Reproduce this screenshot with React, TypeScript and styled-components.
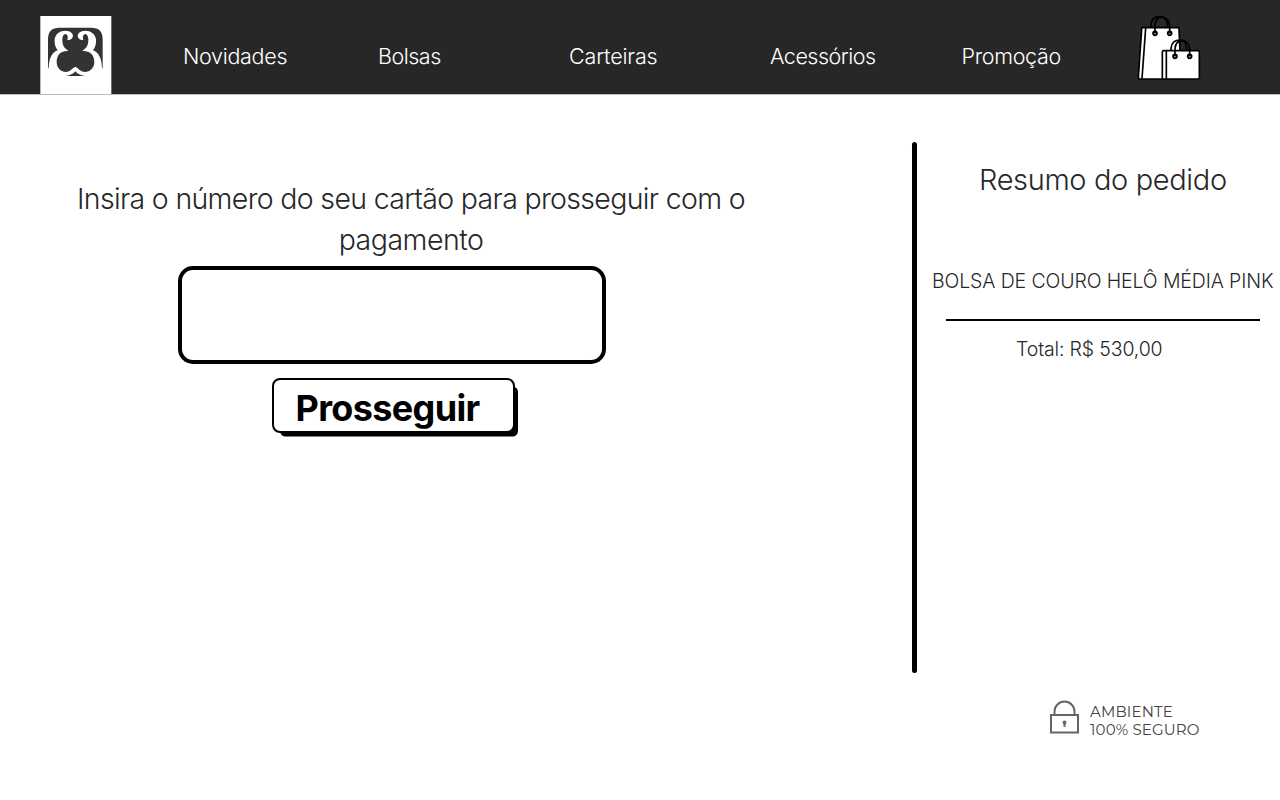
import React from "react";
import styled, { createGlobalStyle } from "styled-components";

const GlobalStyle = createGlobalStyle`
  * { box-sizing: border-box; }
  body {
    margin: 0;
    background: #fff;
    color: #272727;
    font-family: Inter, "Liberation Sans", sans-serif;
    font-weight: 300;
    overflow: hidden;
  }
  h1, h2, p { margin: 0; font-weight: 300; }
`;

const Page = styled.div`
  width: 1280px;
  height: 800px;
`;

const Header = styled.header`
  display: flex;
  height: 95px;
  padding: 16px 60px 0 40px;
  background: #272727;
  border-bottom: 1px solid #bdbdbd;
`;

const Logo = styled.svg`
  flex: none;
  width: 72px;
  height: 78px;
`;

const Nav = styled.nav`
  flex: none;
  display: grid;
  grid-template-columns: 195px 191px 201px 191.5px 150px;
  margin: 26px 0 0 71px;
  width: 954px;
`;

const NavLink = styled.a<{ $spacing: number }>`
  color: #fff;
  font-size: 21.5px;
  line-height: 28px;
  letter-spacing: ${(p) => p.$spacing}px;
  white-space: nowrap;
`;

const Bags = styled.svg`
  flex: none;
  width: 64px;
  height: 66px;
`;

const Main = styled.main`
  display: grid;
  grid-template-columns: 912px 5px 363px;
  padding-top: 47px;
`;

const Payment = styled.section`
  padding: 36px 0 0 71px;
`;

const Prompt = styled.h1`
  width: 680px;
  font-size: 28.5px;
  line-height: 41px;
  text-align: center;
`;

const PromptLine = styled.span<{ $spacing: number }>`
  display: block;
  letter-spacing: ${(p) => p.$spacing}px;
  white-space: nowrap;
`;

const CardInput = styled.input`
  display: block;
  width: 428px;
  height: 98px;
  margin: 6px 0 0 107px;
  padding: 0 20px;
  border: 4px solid #000;
  border-radius: 15px;
  background: #fff;
  font: 300 28px Inter, sans-serif;
  outline: none;
`;

const Proceed = styled.button`
  display: block;
  width: 243px;
  height: 55px;
  margin: 14px 0 0 201px;
  padding: 4px 12px 0 0;
  border: 2px solid #000;
  border-radius: 8px;
  background: #fff;
  box-shadow: 5.5px 6px 0 -2.5px #000;
  color: #000;
  font: 700 36px/44px Inter, sans-serif;
  letter-spacing: -0.65px;
`;

const Divider = styled.div`
  height: 531px;
  border-radius: 2.5px;
  background: #000;
`;

const Summary = styled.aside`
  display: flex;
  flex-direction: column;
  padding: 18px 0 0 15px;
`;

const SummaryTitle = styled.h2`
  margin-left: 47px;
  font-size: 29px;
  line-height: 40px;
  letter-spacing: -0.36px;
  white-space: nowrap;
`;

const Product = styled.p`
  margin-top: 67px;
  font-size: 19.5px;
  line-height: 28px;
  letter-spacing: -0.12px;
  white-space: nowrap;
`;

const Rule = styled.hr`
  width: 314px;
  height: 2px;
  margin: 24px 0 0 14px;
  border: 0;
  background: #000;
`;

const Total = styled.p`
  margin: 14px 0 0 84px;
  font-size: 19.5px;
  line-height: 28px;
  letter-spacing: -0.15px;
`;

const Secure = styled.footer`
  display: flex;
  gap: 10px;
  margin: 27px 0 0 1049px;
`;

const LockIcon = styled.svg`
  width: 31px;
  height: 35px;
`;

const SecureText = styled.p`
  padding-top: 3px;
  color: #444;
  font-family: Montserrat, Inter, sans-serif;
  font-size: 15px;
  font-weight: 400;
  line-height: 18px;
`;

const SecureLine = styled.span<{ $spacing: number }>`
  display: block;
  letter-spacing: ${(p) => p.$spacing}px;
  white-space: nowrap;
`;

const links = [
  { label: "Novidades", spacing: -0.3 },
  { label: "Bolsas", spacing: -0.5 },
  { label: "Carteiras", spacing: -0.15 },
  { label: "Acessórios", spacing: -0.5 },
  { label: "Promoção", spacing: -0.3 },
];

function LogoMark() {
  return (
    <Logo viewBox="30 33 216 234" preserveAspectRatio="none" aria-label="Logo">
      <path fill="#fff" d="M31 33h213v234H31z" />
      <path fill="#333234" d="M54 192V102Q54 68 88 68H184Q218 68 218 102V192L200 160H72z" />
      <path fill="#fff" d="M136 218H56V190C57 162 64 143 83 136C75 126 73 114 74 102C77 86 90 77 106 77C122 77 132 87 128 97C124 105 117 107 112 104C113 99 115 95 111 90C105 83 97 90 97 104C97 119 101 128 114 136L112 147H136z" />
      <path fill="#fff" d="M136 218H216V190C215 162 208 143 189 136C197 126 199 114 198 102C195 86 182 77 166 77C150 77 140 87 144 97C148 105 155 107 160 104C159 99 157 95 161 90C167 83 175 90 175 104C175 119 171 128 158 136L160 147H136z" />
      <path fill="#333234" d="M114 138H158C178 137 193 148 193 171C193 197 165 209 149 195Q142 187 136 185Q130 187 123 195C107 209 80 197 80 171C80 148 94 137 114 138z" />
      <path fill="#333234" d="M108 213Q127 210 136 199Q145 210 164 213z" />
    </Logo>
  );
}

function ShoppingBags() {
  return (
    <Bags viewBox="51 33 192 198" fill="none" stroke="#000" strokeWidth="5" strokeLinejoin="round">
      <path fill="#fff" d="M68 68H174Q177 68 177 72L184 222H60Q55 222 55 217L65 72Q65 68 68 68z" />
      <path d="M77 69L66 221" />
      <path fill="#fff" d="M131 137H234Q238 137 238 141V218Q238 222 234 222H131Q127 222 127 218V141Q127 137 131 137z" />
      <path d="M139 138V221" />
      <circle cx="105" cy="85" r="6" fill="#777" />
      <circle cx="149" cy="85" r="6" fill="#777" />
      <path d="M93 67V60Q93 35 119 35Q145 35 149 60V84M105 84V60Q108 35 128 37Q143 40 143 67" />
      <circle cx="165" cy="154" r="6" fill="#777" />
      <circle cx="209" cy="154" r="6" fill="#777" />
      <path d="M153 136V130Q155 105 180 105Q205 105 209 130V153M165 153V130Q168 106 188 108Q200 111 200 136" />
    </Bags>
  );
}

export default function App() {
  return (
    <Page>
      <GlobalStyle />
      <Header>
        <LogoMark />
        <Nav>
          {links.map((l) => (
            <NavLink key={l.label} $spacing={l.spacing}>{l.label}</NavLink>
          ))}
        </Nav>
        <ShoppingBags />
      </Header>
      <Main>
        <Payment>
          <Prompt>
            <PromptLine $spacing={-0.67}>Insira o número do seu cartão para prosseguir com o</PromptLine>
            <PromptLine $spacing={-0.5}>pagamento</PromptLine>
          </Prompt>
          <CardInput aria-label="Número do cartão" />
          <Proceed>Prosseguir</Proceed>
        </Payment>
        <Divider />
        <Summary>
          <SummaryTitle>Resumo do pedido</SummaryTitle>
          <Product>BOLSA DE COURO HELÔ MÉDIA PINK</Product>
          <Rule />
          <Total>Total: R$ 530,00</Total>
        </Summary>
      </Main>
      <Secure>
        <LockIcon viewBox="0 0 31 35" fill="none" stroke="#666" strokeWidth="2">
          <path d="M2 15H29V32.500H2zM5.500 15V11.500A10 10 0 0 1 25.500 11.500V15" />
          <circle cx="15.500" cy="22.500" r="1.900" fill="#666" stroke="none" />
          <path d="M15.500 23V27" />
        </LockIcon>
        <SecureText>
          <SecureLine $spacing={0.15}>AMBIENTE</SecureLine>
          <SecureLine $spacing={0.15}>100% SEGURO</SecureLine>
        </SecureText>
      </Secure>
    </Page>
  );
}
